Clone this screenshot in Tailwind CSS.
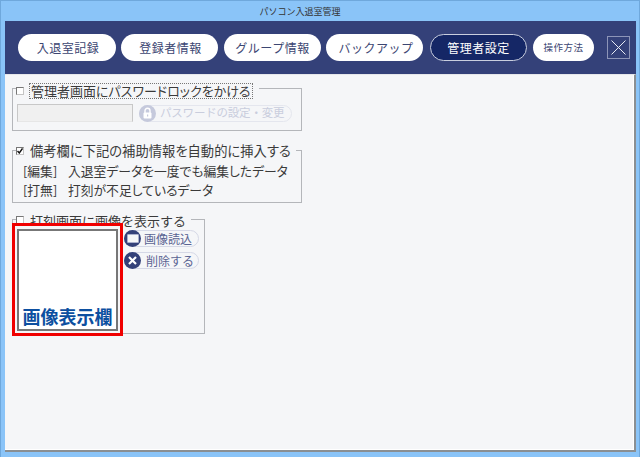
<!DOCTYPE html>
<html lang="ja">
<head>
<meta charset="utf-8">
<script src="https://cdn.jsdelivr.net/npm/@tailwindcss/browser@4"></script>
</head>
<body class="m-0 overflow-hidden">
<div class="w-[640px] h-[457px] flex flex-col bg-[#8ac4f8] border border-[#6fa8dc] border-b-0 pl-[4px] pr-[4px] pb-[5px] text-[#333] font-['Noto_Sans_CJK_JP',sans-serif]">
  <div class="h-[20px] shrink-0 pr-[40px] flex items-center justify-center text-[9px] leading-none text-[#333]">パソコン入退室管理</div>
  <nav class="h-[53px] shrink-0 bg-[#344179] flex items-center pl-[13px] mr-[-1px]">
    <div class="flex items-center">
      <button class="w-[98px] h-[27px] pl-[2px] rounded-full bg-white text-[#3c4672] text-[12px] tracking-[0.5px] leading-none">入退室記録</button>
      <button class="w-[97px] h-[27px] ml-[5px] pl-[2px] rounded-full bg-white text-[#3c4672] text-[12px] tracking-[0.5px] leading-none">登録者情報</button>
      <button class="w-[97px] h-[27px] ml-[6px] rounded-full bg-white text-[#3c4672] text-[12px] tracking-[0.5px] leading-none">グループ情報</button>
      <button class="w-[97px] h-[27px] ml-[5px] pl-[3px] rounded-full bg-white text-[#3c4672] text-[12px] tracking-[0.5px] leading-none">バックアップ</button>
      <button class="w-[97px] h-[27px] ml-[7px] rounded-full bg-[#152766] border border-[#c9cede] text-white text-[12px] tracking-[0.5px] leading-none">管理者設定</button>
      <button class="w-[61px] h-[27px] ml-[6px] rounded-full bg-white text-[#3c4672] text-[9.5px] tracking-[0.5px] leading-none">操作方法</button>
      <button aria-label="閉じる" class="w-[23px] h-[23px] ml-[13px] border border-[#8d95b8] flex items-center justify-center">
        <svg width="15" height="15" viewBox="0 0 15 15" fill="none" stroke="#e8ebf4" stroke-width="1"><path d="M0.5 0.5 14.5 14.5M14.5 0.5 0.5 14.5"/></svg>
      </button>
    </div>
  </nav>
  <main class="relative flex-1 mr-[-1px] bg-[#f5f6f8] border-t border-t-[#e6e7ea] border-r-2 border-r-[#8a8f93] border-b-2 border-b-[#8a8f93] shadow-[inset_-1px_-1px_0_#ffffff] pl-[7px] pt-[13px]">
    <section class="relative w-[290px] h-[43px] border border-[#b4b6ba]">
      <div class="absolute left-[3px] top-[-6px] h-[16px] flex items-center bg-[#f5f6f8]">
        <span class="w-[8px] h-[8px] border border-[#c4c4c4] border-t-[#777] border-l-[#777] bg-white mr-[5px]"></span>
        <span class="h-[16px] px-[1px] border border-[#777] border-dotted text-[13px] leading-[13px] text-[#3a3a3a] whitespace-nowrap bg-[#f5f6f8] [font-feature-settings:'palt']">管理者画面にパスワードロックをかける</span>
        <span class="w-[6px]"></span>
      </div>
      <div class="flex items-center pl-[4px] pt-[15px]">
        <div class="w-[116px] h-[18px] bg-[#f0f0f0] border border-[#c8c8c8] border-b-[#e6e6e6]"></div>
        <div class="ml-[6px] w-[153px] h-[17px] rounded-full border border-[#e4e6ee] flex items-center relative">
          <span class="absolute left-[-1px] top-[-1px] w-[17px] h-[17px] rounded-full bg-[#c5c9dc] flex items-center justify-center">
            <svg width="11" height="12" viewBox="0 0 11 12" fill="none"><path d="M3 6V3.8a2.5 2.5 0 0 1 5 0V6" stroke="#fff" stroke-width="1.4"/><rect x="1.5" y="5.5" width="8" height="6" rx="1" fill="#fff"/><rect x="5" y="7.5" width="1.2" height="2" fill="#c5c9dc"/></svg>
          </span>
          <span class="ml-[20px] text-[11.5px] leading-none text-[#c9cddd] whitespace-nowrap tracking-[-0.2px]">パスワードの設定・変更</span>
        </div>
      </div>
    </section>

    <section class="relative w-[290px] h-[53px] mt-[19px] border border-[#b4b6ba]">
      <div class="absolute left-[3px] top-[-8px] h-[16px] pr-[5px] flex items-center bg-[#f5f6f8]">
        <span class="w-[8px] h-[8px] border border-[#c4c4c4] border-t-[#777] border-l-[#777] bg-white mr-[6px] flex items-center justify-center">
          <svg width="6" height="6" viewBox="0 0 6 6" fill="none" stroke="#111" stroke-width="1.4"><path d="M0.5 3 2.3 5 5.5 0.5"/></svg>
        </span>
        <span class="text-[13.3px] leading-none text-[#3a3a3a] whitespace-nowrap [font-feature-settings:'palt']">備考欄に下記の補助情報を自動的に挿入する</span>
      </div>
      <div class="pl-[10px] pt-[10px] text-[12.8px] leading-[19px] text-[#3a3a3a] whitespace-nowrap [font-feature-settings:'palt']">
        <div class="h-[19px] flex"><span class="w-[45px]">[編集]</span><span>入退室データを一度でも編集したデータ</span></div>
        <div class="h-[19px] flex"><span class="w-[45px]">[打無]</span><span>打刻が不足しているデータ</span></div>
      </div>
    </section>

    <section class="relative w-[193px] h-[115px] mt-[16px] border border-[#b4b6ba]">
      <div class="absolute left-[3px] top-[-8px] h-[16px] pr-[5px] flex items-center bg-[#f5f6f8]">
        <span class="w-[8px] h-[8px] border border-[#c4c4c4] border-t-[#777] border-l-[#777] bg-white mr-[6px]"></span>
        <span class="text-[13px] leading-none text-[#3a3a3a] whitespace-nowrap">打刻画面に画像を表示する</span>
      </div>
      <div class="flex items-start">
        <div class="relative z-10 w-[111px] h-[113px] mt-[3px] ml-[-1px] border-[3px] border-[#f00000] pl-[2px] pt-[3px] bg-[#f5f6f8] shrink-0">
          <div class="w-[101px] h-[102px] bg-white border-2 border-[#777] flex items-end justify-center pb-[1px]">
            <span class="text-[18px] leading-[24px] font-bold text-[#0c4fa0] whitespace-nowrap">画像表示欄</span>
          </div>
        </div>
        <div class="flex flex-col gap-[5px] mt-[10px] ml-[1px]">
          <div class="relative w-[75px] h-[17px] rounded-full border border-[#d5d8e6] flex items-center">
            <span class="absolute left-[-1px] top-[-1px] w-[17px] h-[17px] rounded-full bg-[#344179] flex items-center justify-center"><span class="block w-[12px] h-[9px] bg-[#f5f6f8] border border-[#aab0cc] rounded-[1px]"></span></span>
            <span class="ml-[19px] text-[12px] leading-none text-[#5b6493] whitespace-nowrap">画像読込</span>
          </div>
          <div class="relative w-[75px] h-[17px] rounded-full border border-[#d5d8e6] flex items-center">
            <span class="absolute left-[-1px] top-[-1px] w-[17px] h-[17px] rounded-full bg-[#344179] flex items-center justify-center">
              <svg width="9" height="9" viewBox="0 0 9 9" fill="none" stroke="#fff" stroke-width="2.2"><path d="M1 1 8 8M8 1 1 8"/></svg>
            </span>
            <span class="ml-[21px] text-[12px] leading-none text-[#5b6493] whitespace-nowrap">削除する</span>
          </div>
        </div>
      </div>
    </section>
  </main>
</div>
</body>
</html>
